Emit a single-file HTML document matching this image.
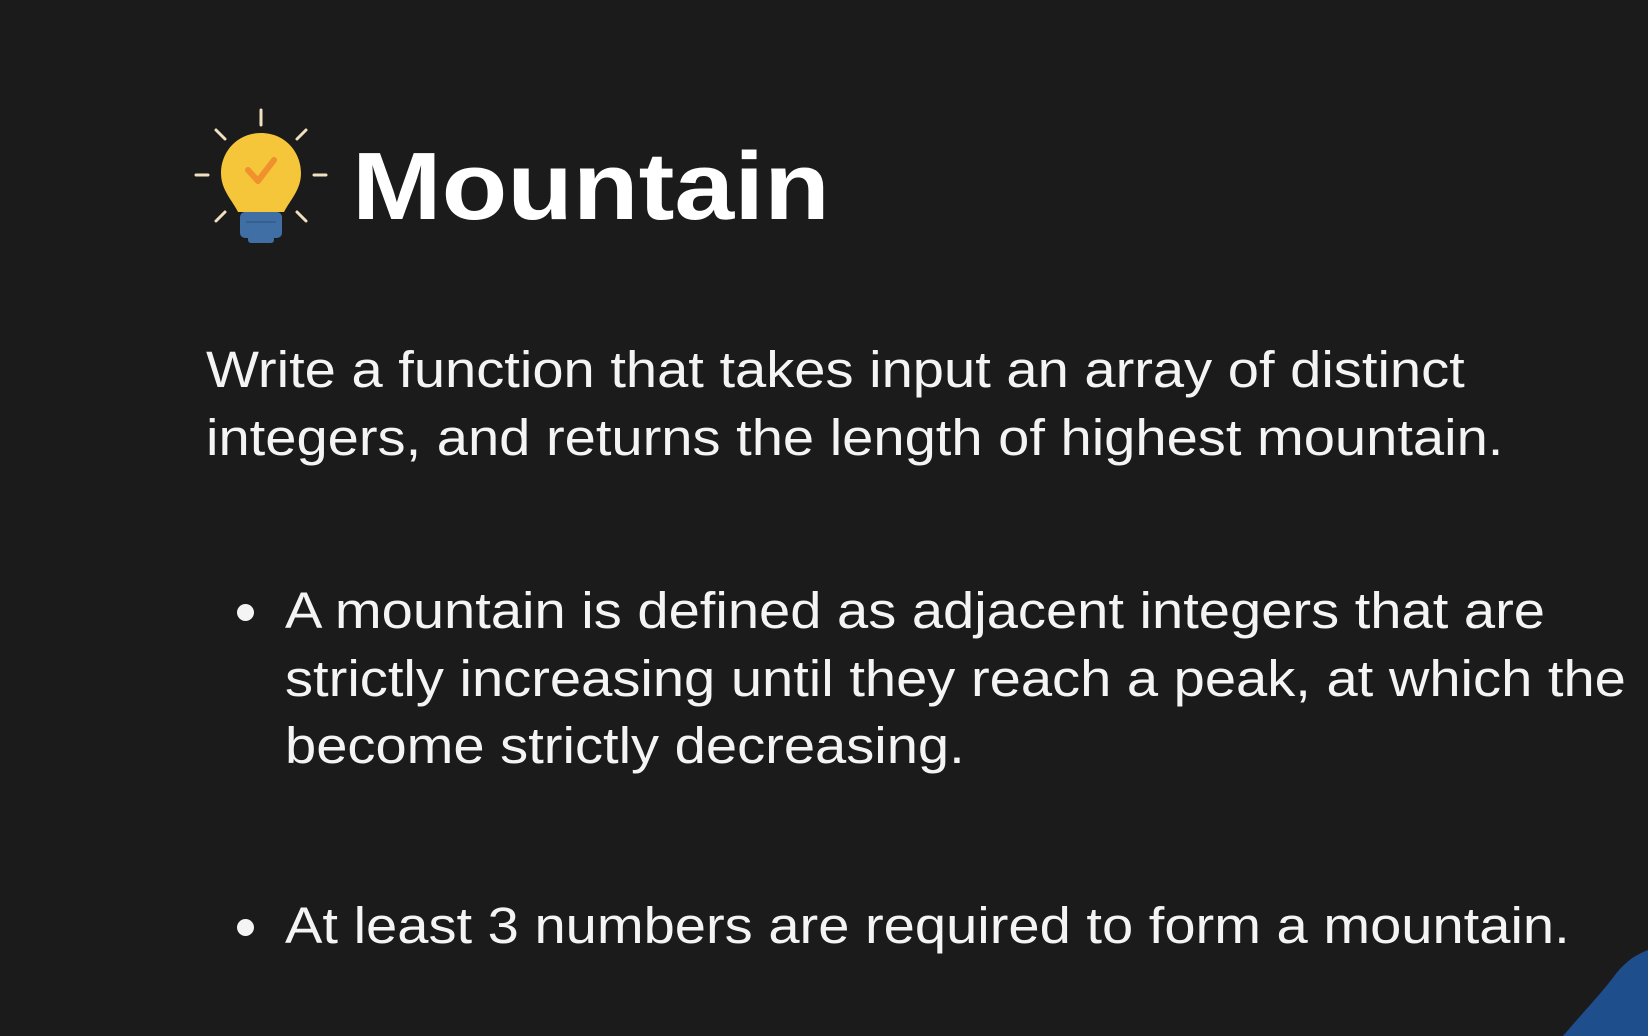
<!DOCTYPE html>
<html><head><meta charset="utf-8"><style>
html,body{margin:0;padding:0;background:#1b1b1b;width:1648px;height:1036px;overflow:hidden;position:relative;font-family:"Liberation Sans",sans-serif;color:#f4f4f4}
.t{position:absolute;white-space:nowrap;line-height:1;transform-origin:0 0}
.title{font-weight:bold;font-size:96px;left:352px;top:139px;color:#fff;transform:scaleX(1.12)}
.p{font-size:51px;transform:scaleX(1.1)}
.dot{position:absolute;width:17px;height:17px;border-radius:50%;background:#f4f4f4}
</style></head><body>
<svg style="position:absolute;left:0;top:0" width="1648" height="1036">
 <g stroke="#f0e0c0" stroke-width="3" stroke-linecap="round">
  <line x1="261" y1="110" x2="261" y2="125"/>
  <line x1="196" y1="175" x2="208" y2="175"/>
  <line x1="314" y1="175" x2="326" y2="175"/>
  <line x1="216" y1="130" x2="225" y2="139"/>
  <line x1="306" y1="130" x2="297" y2="139"/>
  <line x1="216" y1="221" x2="225" y2="212"/>
  <line x1="306" y1="221" x2="297" y2="212"/>
 </g>
 <path d="M261 133 C237 133 221 152 221 173 C221 190 232 200 238 212 L284 212 C290 200 301 190 301 173 C301 152 285 133 261 133Z" fill="#f5c53a"/>
 <rect x="240" y="212" width="42" height="26" rx="5" fill="#3f6fa5"/>
 <rect x="248" y="236" width="26" height="7" rx="3" fill="#3f6fa5"/>
 <line x1="246" y1="222" x2="276" y2="222" stroke="#35608f" stroke-width="2"/>
 <path d="M248 170 L258 181 L274 160" fill="none" stroke="#f0902e" stroke-width="6" stroke-linecap="round" stroke-linejoin="round"/>
 <path d="M1563 1036 C1585 1010 1600 995 1615 975 C1625 962 1635 955 1648 950 L1648 1036Z" fill="#1f4e8c"/>
</svg>
<div class="t title">Mountain</div>
<div class="t p" style="left:206px;top:344px">Write a function that takes input an array of distinct</div>
<div class="t p" style="left:206px;top:412px">integers, and returns the length of highest mountain.</div>
<div class="dot" style="left:237px;top:604px"></div>
<div class="t p" style="left:285px;top:585px">A mountain is defined as adjacent integers that are</div>
<div class="t p" style="left:285px;top:653px">strictly increasing until they reach a peak, at which the</div>
<div class="t p" style="left:285px;top:720px">become strictly decreasing.</div>
<div class="dot" style="left:237px;top:919px"></div>
<div class="t p" style="left:285px;top:900px">At least 3 numbers are required to form a mountain.</div>
</body></html>
